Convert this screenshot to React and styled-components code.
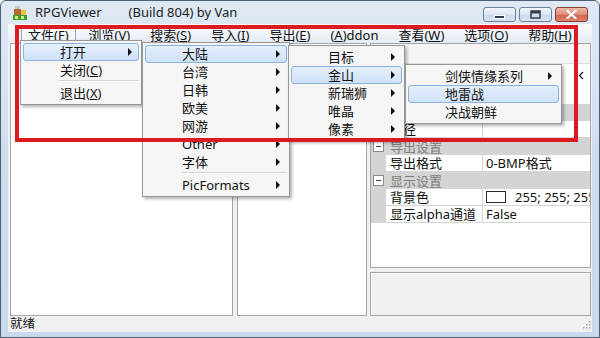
import React from "react";
import styled, { createGlobalStyle, css } from "styled-components";

const GlobalStyle = createGlobalStyle`
  html, body { margin: 0; padding: 0; }
  body {
    width: 600px;
    height: 338px;
    overflow: hidden;
    background: #fff;
    font-family: "Noto Sans", "Noto Sans CJK SC", sans-serif;
  }
`;

const Stage = styled.div`
  position: relative;
  width: 600px;
  height: 338px;
`;

const Window = styled.div`
  box-sizing: border-box;
  width: 600px;
  height: 338px;
  display: flex;
  flex-direction: column;
  padding: 0 7px 5px 7px;
  border: 1px solid #4e5e72;
  border-radius: 6px 6px 0 0;
  background: linear-gradient(180deg, #dfe9f5 0%, #cfdeef 45%, #c8d9ed 100%);
  overflow: hidden;
`;

const TitleBar = styled.div`
  height: 23px;
  flex: none;
  display: flex;
  align-items: center;
  padding-left: 4px;
`;

const Title = styled.div`
  margin-left: 7px;
  font-size: 13px;
  line-height: 23px;
  color: #1c1c1c;
  white-space: pre;
`;

const CaptionGroup = styled.div`
  margin-left: auto;
  margin-right: 4px;
  align-self: flex-start;
  margin-top: 6px;
  display: flex;
  gap: 3px;
`;

const CaptionButton = styled.div`
  width: 33px;
  height: 15px;
  box-sizing: border-box;
  border: 1px solid #6f8198;
  border-radius: 3px;
  display: flex;
  align-items: center;
  justify-content: center;
  background: linear-gradient(180deg, #f1f5fb 0%, #dce6f3 50%, #c8d8ec 51%, #d8e4f2 100%);
  ${(p) =>
    p.$close &&
    css`
      border-color: #8a3b33;
      background: linear-gradient(180deg, #eebaa9 0%, #de8c76 50%, #cf624b 51%, #dc856c 100%);
    `}
`;

const Client = styled.div`
  flex: 1;
  min-height: 0;
  display: flex;
  flex-direction: column;
  background: #f0f0f0;
`;

const MenuBar = styled.div`
  height: 19px;
  flex: none;
  display: flex;
  align-items: flex-end;
  gap: 6px;
  padding-left: 13px;
  background: linear-gradient(180deg, #fbfcfe 0%, #eef2f8 60%, #e4ebf4 100%);
  font-size: 13px;
  color: #111;
`;

const MenuTitle = styled.div`
  height: 17px;
  box-sizing: border-box;
  padding: 1px 6px 0;
  line-height: 15px;
  white-space: nowrap;
  border: 1px solid transparent;
  border-bottom: none;
  ${(p) =>
    p.$open &&
    css`
      background: linear-gradient(180deg, #f8fafd, #eef2f7);
      border-color: #9aa6b4;
      border-radius: 2px 2px 0 0;
    `}
`;

const Main = styled.div`
  flex: 1;
  min-height: 0;
  display: flex;
  padding: 0 1px 0 2px;
`;

const Pane = styled.div`
  width: ${(p) => p.$w}px;
  flex: none;
  box-sizing: border-box;
  background: #fff;
  border: 1px solid #a5a5a5;
`;

const Splitter = styled.div`
  width: ${(p) => p.$w}px;
  flex: none;
`;

const RightColumn = styled.div`
  flex: 1;
  display: flex;
  flex-direction: column;
  gap: 4px;
`;

const PropGrid = styled.div`
  height: 225px;
  flex: none;
  box-sizing: border-box;
  border: 1px solid #a5a5a5;
  background: #fff;
  display: flex;
  flex-direction: column;
  font-size: 13px;
  line-height: 16px;
  color: #111;
  overflow: hidden;
`;

const GridToolbar = styled.div`
  height: 20px;
  flex: none;
  background: #f4f4f4;
  border-bottom: 1px solid #e3e3e3;
  box-sizing: border-box;
`;

const GridHeader = styled.div`
  height: 40px;
  flex: none;
  display: flex;
  justify-content: flex-end;
  padding: 7px 6px 0 0;
  box-sizing: border-box;
`;

const CategoryRow = styled.div`
  height: 17px;
  flex: none;
  display: flex;
  align-items: center;
  background: #d4d4d4;
  color: #7d7d7d;
  white-space: nowrap;
  overflow: hidden;
`;

const Toggle = styled.span`
  position: relative;
  width: 11px;
  height: 11px;
  flex: none;
  box-sizing: border-box;
  margin: 0 6px 0 2px;
  border: 1px solid #8c8c8c;
  background: #fff;
  &::after {
    content: "";
    position: absolute;
    left: 2px;
    right: 2px;
    top: 4px;
    height: 1px;
    background: #444;
  }
`;

const PropRow = styled.div`
  height: 17px;
  flex: none;
  box-sizing: border-box;
  display: grid;
  grid-template-columns: 15px 97px 1fr;
  border-bottom: 1px solid #d4d4d4;
  overflow: hidden;
`;

const Gutter = styled.div`
  background: #d4d4d4;
`;

const PropLabel = styled.div`
  padding-left: 4px;
  border-right: 1px solid #d4d4d4;
  white-space: nowrap;
  overflow: hidden;
`;

const PropValue = styled.div`
  padding-left: 3px;
  display: flex;
  align-items: center;
  white-space: nowrap;
  overflow: hidden;
`;

const Swatch = styled.span`
  width: 20px;
  height: 12px;
  flex: none;
  box-sizing: border-box;
  border: 1px solid #2b2b2b;
  background: #fff;
  margin-right: 9px;
`;

const DescBox = styled.div`
  flex: 1;
  box-sizing: border-box;
  border: 1px solid #a5a5a5;
  box-shadow: inset 1px 1px 0 #fff;
  background: #f0f0f0;
`;

const StatusBar = styled.div`
  height: 16px;
  flex: none;
  display: flex;
  align-items: center;
  justify-content: space-between;
  padding: 0 1px 0 2px;
  font-size: 12.5px;
  line-height: 16px;
  color: #111;
`;

const Dropdown = styled.div`
  position: absolute;
  left: ${(p) => p.$x}px;
  top: ${(p) => p.$y}px;
  width: ${(p) => p.$w}px;
  box-sizing: border-box;
  padding: 2px 0;
  background: #f5f5f5;
  border: 1px solid #979797;
  box-shadow: 2px 2px 3px rgba(0, 0, 0, 0.3);
  font-size: 13px;
  line-height: 16px;
  color: #111;
  z-index: 2;
`;

const MenuRow = styled.div`
  position: relative;
  height: 18px;
  box-sizing: border-box;
  margin: 0 2px;
  padding-left: 36px;
  display: flex;
  align-items: center;
  white-space: nowrap;
  border: 1px solid transparent;
  border-radius: 3px;
  ${(p) =>
    p.$active &&
    css`
      background: linear-gradient(180deg, #e4effc 0%, #cfe2f8 100%);
      border-color: #8db2de;
    `}
`;

const SubArrow = styled.span`
  position: absolute;
  right: 6px;
  top: 50%;
  margin-top: -4px;
  width: 0;
  height: 0;
  border-left: 4px solid #111;
  border-top: 4px solid transparent;
  border-bottom: 4px solid transparent;
`;

const MenuSeparator = styled.div`
  height: 1px;
  margin: 1px 2px 2px 38px;
  background: #d5d5d5;
  border-bottom: 1px solid #fff;
`;

const Annotation = styled.div`
  position: absolute;
  left: 15px;
  top: 25px;
  width: 563px;
  height: 117px;
  box-sizing: border-box;
  border: 4px solid #dc1a22;
  z-index: 5;
  pointer-events: none;
`;

function AppIcon() {
  return (
    <svg width="16" height="16" viewBox="0 0 16 16">
      <rect x="3" y="1" width="5" height="4" fill="#c9c9c9" />
      <rect x="2" y="4" width="7" height="6" fill="#b06a2a" />
      <rect x="9" y="5" width="5" height="5" fill="#e9c23e" />
      <rect x="1" y="10" width="14" height="5" fill="#3f9c2e" />
      <rect x="3" y="11" width="3" height="3" fill="#d8ec7a" />
      <rect x="9" y="11" width="3" height="3" fill="#d8ec7a" />
    </svg>
  );
}

function MinGlyph() {
  return (
    <svg width="11" height="8" viewBox="0 0 11 8">
      <rect x="0.5" y="4.5" width="10" height="3" fill="#2f3b4a" stroke="#fff" strokeWidth="1" />
    </svg>
  );
}

function MaxGlyph() {
  return (
    <svg width="11" height="9" viewBox="0 0 11 9">
      <rect x="1" y="1" width="9" height="7" fill="none" stroke="#2f3b4a" strokeWidth="1.5" />
      <rect x="1" y="1" width="9" height="2.5" fill="#2f3b4a" />
    </svg>
  );
}

function CloseGlyph() {
  return (
    <svg width="11" height="9" viewBox="0 0 11 9">
      <path d="M1.5 1 L9.5 8 M9.5 1 L1.5 8" stroke="#fff" strokeWidth="2.2" strokeLinecap="round" />
    </svg>
  );
}

function Grip() {
  const dots = [
    [8, 2],
    [5, 5],
    [8, 5],
    [2, 8],
    [5, 8],
    [8, 8],
  ];
  return (
    <svg width="10" height="10" viewBox="0 0 10 10">
      {dots.map(([x, y]) => (
        <rect key={`${x}-${y}`} x={x} y={y} width="1.5" height="1.5" fill="#a8a8a8" />
      ))}
    </svg>
  );
}

function ChevronLeft() {
  return (
    <svg width="6" height="9" viewBox="0 0 6 9">
      <path d="M5 1 L1.5 4.5 L5 8" fill="none" stroke="#222" strokeWidth="1.3" />
    </svg>
  );
}

const menuTitles = [
  ["文件(", "F", ")"],
  ["浏览(", "V", ")"],
  ["搜索(", "S", ")"],
  ["导入(", "I", ")"],
  ["导出(", "E", ")"],
  ["(", "A", ")ddon"],
  ["查看(", "W", ")"],
  ["选项(", "O", ")"],
  ["帮助(", "H", ")"],
];

// each menu: position + rows; "-" is a separator
const menus = [
  {
    x: 20,
    y: 40,
    w: 122,
    items: [
      { label: "打开", sub: true, active: true },
      { label: ["关闭(", "C", ")"] },
      "-",
      { label: ["退出(", "X", ")"] },
    ],
  },
  {
    x: 142,
    y: 42,
    w: 148,
    items: [
      { label: "大陆", sub: true, active: true },
      { label: "台湾", sub: true },
      { label: "日韩", sub: true },
      { label: "欧美", sub: true },
      { label: "网游", sub: true },
      { label: "Other", sub: true },
      { label: "字体", sub: true },
      "-",
      { label: "PicFormats", sub: true },
    ],
  },
  {
    x: 288,
    y: 45,
    w: 117,
    items: [
      { label: "目标", sub: true },
      { label: "金山", sub: true, active: true },
      { label: "新瑞狮", sub: true },
      { label: "唯晶", sub: true },
      { label: "像素", sub: true },
    ],
  },
  {
    x: 405,
    y: 64,
    w: 157,
    items: [
      { label: "剑侠情缘系列", sub: true },
      { label: "地雷战", active: true },
      { label: "决战朝鲜" },
    ],
  },
];

function Accel({ parts }) {
  if (typeof parts === "string") return parts;
  return (
    <>
      {parts[0]}
      <u>{parts[1]}</u>
      {parts[2]}
    </>
  );
}

function PopupMenu({ menu }) {
  return (
    <Dropdown $x={menu.x} $y={menu.y} $w={menu.w}>
      {menu.items.map((item, i) =>
        item === "-" ? (
          <MenuSeparator key={i} />
        ) : (
          <MenuRow key={i} $active={item.active}>
            <Accel parts={item.label} />
            {item.sub && <SubArrow />}
          </MenuRow>
        )
      )}
    </Dropdown>
  );
}

function PropertyGrid() {
  return (
    <PropGrid>
      <GridToolbar />
      <GridHeader>
        <ChevronLeft />
      </GridHeader>
      <CategoryRow>
        <Toggle />
        文件信息
      </CategoryRow>
      <PropRow>
        <Gutter />
        <PropLabel>路径</PropLabel>
        <PropValue />
      </PropRow>
      <CategoryRow>
        <Toggle />
        导出设置
      </CategoryRow>
      <PropRow>
        <Gutter />
        <PropLabel>导出格式</PropLabel>
        <PropValue>0-BMP格式</PropValue>
      </PropRow>
      <CategoryRow>
        <Toggle />
        显示设置
      </CategoryRow>
      <PropRow>
        <Gutter />
        <PropLabel>背景色</PropLabel>
        <PropValue>
          <Swatch />
          255; 255; 255
        </PropValue>
      </PropRow>
      <PropRow>
        <Gutter />
        <PropLabel>显示alpha通道</PropLabel>
        <PropValue>False</PropValue>
      </PropRow>
    </PropGrid>
  );
}

export default function App() {
  return (
    <Stage>
      <GlobalStyle />
      <Window>
        <TitleBar>
          <AppIcon />
          <Title>{"RPGViewer        (Build 804) by Van"}</Title>
          <CaptionGroup>
            <CaptionButton>
              <MinGlyph />
            </CaptionButton>
            <CaptionButton>
              <MaxGlyph />
            </CaptionButton>
            <CaptionButton $close>
              <CloseGlyph />
            </CaptionButton>
          </CaptionGroup>
        </TitleBar>
        <Client>
          <MenuBar>
            {menuTitles.map((t, i) => (
              <MenuTitle key={i} $open={i === 0}>
                <Accel parts={t} />
              </MenuTitle>
            ))}
          </MenuBar>
          <Main>
            <Pane $w={223} />
            <Splitter $w={4} />
            <Pane $w={130} />
            <Splitter $w={3} />
            <RightColumn>
              <PropertyGrid />
              <DescBox />
            </RightColumn>
          </Main>
          <StatusBar>
            <span>就绪</span>
            <Grip />
          </StatusBar>
        </Client>
      </Window>
      {menus.map((m, i) => (
        <PopupMenu key={i} menu={m} />
      ))}
      <Annotation />
    </Stage>
  );
}
